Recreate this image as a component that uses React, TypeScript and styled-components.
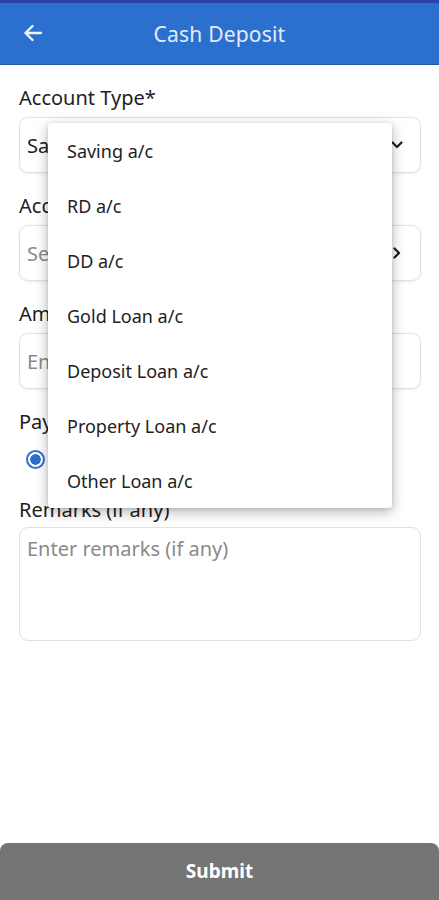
import * as React from "react";
import styled, { createGlobalStyle } from "styled-components";

const accountTypes = [
  "Saving a/c",
  "RD a/c",
  "DD a/c",
  "Gold Loan a/c",
  "Deposit Loan a/c",
  "Property Loan a/c",
  "Other Loan a/c",
];

const ChevronDown = () => (
  <svg width="14" height="14" viewBox="0 0 14 14">
    <path d="M2.5 4.5 L7 9 L11.5 4.5" fill="none" stroke="#1c1c1c" strokeWidth="2.2" strokeLinecap="round" strokeLinejoin="round" />
  </svg>
);

const ChevronRight = () => (
  <svg width="14" height="14" viewBox="0 0 14 14">
    <path d="M4.5 2.5 L9 7 L4.5 11.5" fill="none" stroke="#1c1c1c" strokeWidth="2.2" strokeLinecap="round" strokeLinejoin="round" />
  </svg>
);

const BackArrow = () => (
  <svg width="22" height="22" viewBox="0 0 22 22">
    <path d="M19 11 H3.5 M10.5 4 L3.5 11 L10.5 18" fill="none" stroke="#eef3fb" strokeWidth="2.4" strokeLinecap="round" strokeLinejoin="round" />
  </svg>
);

export default function App() {
  return (
    <>
      <GlobalStyle />
      <Page>
        <Header>
          <BackButton>
            <BackArrow />
          </BackButton>
          <Title>Cash Deposit</Title>
        </Header>

        <Form>
          <Field>
            <Label>Account Type*</Label>
            <Box>
              <Value>Saving a/c</Value>
              <ChevronDown />
            </Box>
          </Field>

          <Field>
            <Label>Account Number*</Label>
            <Box>
              <Value placeholder>Select account</Value>
              <ChevronRight />
            </Box>
          </Field>

          <Field>
            <Label>Amount*</Label>
            <Box>
              <Value placeholder>Enter amount</Value>
            </Box>
          </Field>

          <Field>
            <Label>Payment Mode</Label>
            <RadioRow>
              <Radio />
              <RadioText>Cash</RadioText>
            </RadioRow>
          </Field>

          <Field tight>
            <Label>Remarks (if any)</Label>
            <TextArea>
              <Value placeholder>Enter remarks (if any)</Value>
            </TextArea>
          </Field>
        </Form>

        <Submit>Submit</Submit>

        <Menu>
          {accountTypes.map((t) => (
            <MenuItem key={t}>{t}</MenuItem>
          ))}
        </Menu>
      </Page>
    </>
  );
}

//////////
// Style
//////////
const GlobalStyle = createGlobalStyle`
  html, body {
    margin: 0;
    padding: 0;
    background: #ffffff;
  }
  body {
    font-family: "Noto Sans", "Open Sans", sans-serif;
  }
`;

const Page = styled.div`
  position: relative;
  display: flex;
  flex-direction: column;
  width: 439px;
  height: 900px;
  overflow: hidden;
  background: #ffffff;
`;

const Header = styled.header`
  position: relative;
  display: flex;
  align-items: center;
  justify-content: center;
  height: 61px;
  background: #2c70cf;
  border-top: 3px solid #2c43a6;
  border-bottom: 1px solid #2458a8;
`;

const BackButton = styled.div`
  position: absolute;
  left: 22px;
  top: 19px;
  display: flex;
`;

const Title = styled.h1`
  margin: 0;
  font-size: 21px;
  font-weight: 400;
  color: #e3ecfa;
  letter-spacing: 0.2px;
`;

const Form = styled.div`
  display: flex;
  flex-direction: column;
  padding: 21px 18px 0 19px;
`;

const Field = styled.div<{ tight?: boolean }>`
  display: flex;
  flex-direction: column;
  gap: ${(p) => (p.tight ? "5px" : "7px")};
  margin-bottom: ${(p) => (p.tight ? "0" : "21px")};

  &:nth-child(4) {
    margin-bottom: 27px;
  }
`;

const Label = styled.div`
  font-size: 20px;
  line-height: 24px;
  color: #1e1e1e;
`;

const Box = styled.div`
  display: flex;
  align-items: center;
  justify-content: space-between;
  height: 54px;
  padding: 0 16px 0 7px;
  border: 1px solid #e2e2e2;
  border-radius: 9px;
  box-shadow: 0 1px 3px rgba(0, 0, 0, 0.08);
`;

const Value = styled.span<{ placeholder?: boolean }>`
  font-size: 20px;
  color: ${(p) => (p.placeholder ? "#8a8a8a" : "#222222")};
`;

const RadioRow = styled.div`
  display: flex;
  align-items: center;
  gap: 12px;
  height: 24px;
  margin-top: 6px;
  padding-left: 7px;
`;

const Radio = styled.span`
  width: 15px;
  height: 15px;
  border-radius: 50%;
  border: 2.5px solid #2c70cf;
  box-sizing: content-box;
  background: radial-gradient(circle, #2c70cf 0 5px, #ffffff 5.5px);
`;

const RadioText = styled.span`
  font-size: 20px;
  color: #222222;
`;

const TextArea = styled.div`
  height: 105px;
  padding: 7px 7px 0;
  border: 1px solid #e2e2e2;
  border-radius: 9px;
`;

const Submit = styled.button`
  margin-top: auto;
  height: 57px;
  width: 100%;
  border: none;
  border-radius: 8px 8px 0 0;
  background: #757575;
  color: #ffffff;
  font-family: "Noto Sans", "Open Sans", sans-serif;
  font-size: 19px;
  font-weight: 700;
  padding-bottom: 2px;
`;

const Menu = styled.ul`
  position: absolute;
  top: 123px;
  left: 48px;
  width: 344px;
  margin: 0;
  padding: 0;
  list-style: none;
  background: #ffffff;
  border-radius: 3px;
  box-shadow: 0 4px 14px rgba(0, 0, 0, 0.28), 0 1px 4px rgba(0, 0, 0, 0.12);
`;

const MenuItem = styled.li`
  display: flex;
  align-items: center;
  height: 55px;
  padding-left: 19px;
  font-size: 18px;
  color: #222222;
`;
